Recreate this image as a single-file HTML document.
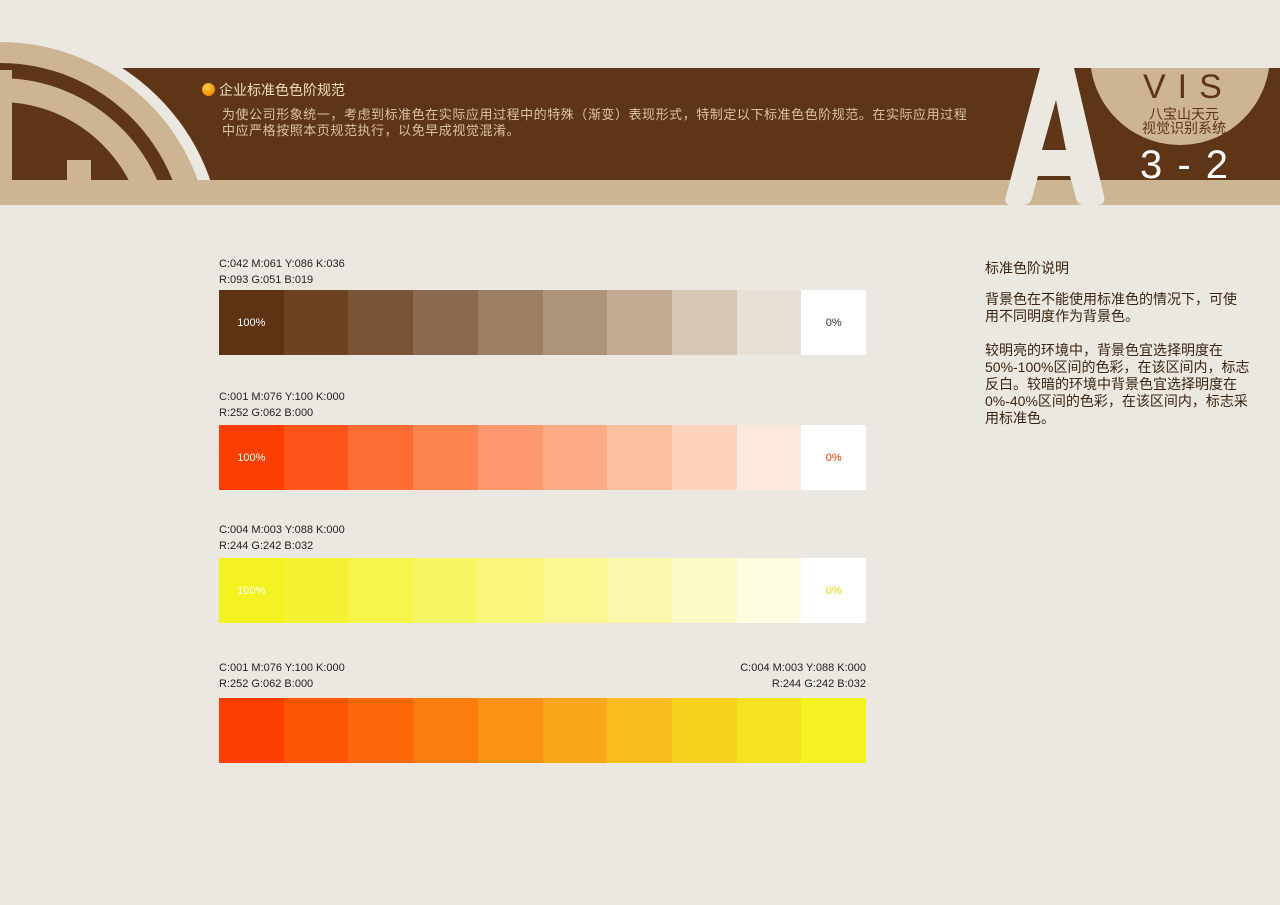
<!DOCTYPE html>
<html><head><meta charset="utf-8"><style>
body{margin:0;width:1280px;height:905px;background:#ebe8e2;position:relative;overflow:hidden;font-family:"Liberation Sans","Noto Sans CJK SC",sans-serif}
.abs{position:absolute}
.lbl{font-size:11px;color:#222;line-height:16px}
.row{position:absolute;left:219px;width:647px;height:65px;display:flex}
.row div{flex:1;display:flex;align-items:center;justify-content:center;font-size:11px}
</style></head><body>
<svg class="abs" style="left:0;top:0" width="1280" height="215">
<rect x="120" y="68" width="1160" height="112" fill="#5e3516"/>
<ellipse cx="0" cy="250" rx="222" ry="218" fill="#ebe8e2"/>
<ellipse cx="0" cy="250" rx="210" ry="208" fill="#cdb593"/>
<ellipse cx="0" cy="250" rx="186" ry="187" fill="#5e3516"/>
<ellipse cx="0" cy="250" rx="172" ry="172" fill="#cdb593"/>
<ellipse cx="0" cy="250" rx="146" ry="148" fill="#5e3516"/>
<rect x="0" y="70" width="12" height="140" fill="#cdb593"/>
<rect x="67" y="160" width="24" height="25" fill="#cdb593"/>
<rect x="0" y="180" width="1280" height="25" fill="#cdb593"/>
<rect x="0" y="205" width="1280" height="10" fill="#ebe8e2"/>
<clipPath id="c"><rect x="1080" y="68" width="200" height="112"/></clipPath>
<circle cx="1180" cy="55" r="90" fill="#cdb593" clip-path="url(#c)"/>
<path d="M1040 68 L1074 68 L1104 196 Q1106 205 1096 205 L1084 205 Q1078 205 1076 198 L1070 176 L1038 176 L1032 198 Q1030 205 1022 205 L1012 205 Q1003 205 1006 196 Z M1042 150 L1066 150 L1056 100 Z" fill="#ebe8e2"/>
</svg>
<div class="abs" style="left:202px;top:83px;width:13px;height:13px;border-radius:50%;background:radial-gradient(circle at 40% 35%,#ffd24a,#f08a00 70%,#c55a00)"></div>
<div class="abs" style="left:219px;top:80px;font-size:14px;color:#f0dcc0">企业标准色色阶规范</div>
<div class="abs" style="left:222px;top:107px;font-size:13px;line-height:16px;color:#dcc3a2;white-space:nowrap;letter-spacing:0.55px">为使公司形象统一，考虑到标准色在实际应用过程中的特殊（渐变）表现形式，特制定以下标准色色阶规范。在实际应用过程<br>中应严格按照本页规范执行，以免早成视觉混淆。</div>
<div class="abs" style="left:1143px;top:68px;font-size:34px;letter-spacing:12px;color:#5e3516">VIS</div>
<div class="abs" style="left:1140px;top:107px;font-size:14px;line-height:14px;color:#5e3516;text-align:center;width:88px">八宝山天元<br>视觉识别系统</div>
<div class="abs" style="left:1140px;top:145px;font-size:40px;line-height:40px;color:#fff;letter-spacing:2px">3 - 2</div>

<div class="abs lbl" style="left:219px;top:256px">C:042 M:061 Y:086 K:036<br>R:093 G:051 B:019</div>
<div class="row" style="top:290px"><div style="background:#5d3313;color:#fff">100%</div><div style="background:#6b4222"></div><div style="background:#7b5436"></div><div style="background:#8b6a4f"></div><div style="background:#9b7f65"></div><div style="background:#ac937a"></div><div style="background:#c2ab92"></div><div style="background:#d6c7b2"></div><div style="background:#e8e0d5"></div><div style="background:#fff;color:#333">0%</div></div>

<div class="abs lbl" style="left:219px;top:389px">C:001 M:076 Y:100 K:000<br>R:252 G:062 B:000</div>
<div class="row" style="top:425px"><div style="background:#fc3e00;color:#fff">100%</div><div style="background:#fd5519"></div><div style="background:#fd6c33"></div><div style="background:#fd834f"></div><div style="background:#fd996c"></div><div style="background:#fdab86"></div><div style="background:#fdbf9d"></div><div style="background:#fdd3bb"></div><div style="background:#fde8dc"></div><div style="background:#fff;color:#e04000">0%</div></div>

<div class="abs lbl" style="left:219px;top:522px">C:004 M:003 Y:088 K:000<br>R:244 G:242 B:032</div>
<div class="row" style="top:558px"><div style="background:#f4f220;color:#fff">100%</div><div style="background:#f4f333"></div><div style="background:#f6f54c"></div><div style="background:#f7f665"></div><div style="background:#f8f77c"></div><div style="background:#f9f893"></div><div style="background:#faf9ab"></div><div style="background:#fcfbc6"></div><div style="background:#fdfde2"></div><div style="background:#fff;color:#e8d800">0%</div></div>

<div class="abs lbl" style="left:219px;top:660px">C:001 M:076 Y:100 K:000<br>R:252 G:062 B:000</div>
<div class="abs lbl" style="left:700px;top:660px;width:166px;text-align:right">C:004 M:003 Y:088 K:000<br>R:244 G:242 B:032</div>
<div class="row" style="top:698px"><div style="background:#fc3e00"></div><div style="background:#fd5305"></div><div style="background:#fd680a"></div><div style="background:#fb7d0e"></div><div style="background:#fa9313"></div><div style="background:#f8a817"></div><div style="background:#f7bd1b"></div><div style="background:#f6d21f"></div><div style="background:#f5e222"></div><div style="background:#f4f220"></div></div>

<div class="abs" style="left:985px;top:258px;font-size:14px;color:#3a2410">标准色阶说明</div>
<div class="abs" style="left:985px;top:291px;font-size:14px;line-height:17px;color:#3a2410;white-space:nowrap">背景色在不能使用标准色的情况下，可使<br>用不同明度作为背景色。<br><br>较明亮的环境中，背景色宜选择明度在<br>50%-100%区间的色彩，在该区间内，标志<br>反白。较暗的环境中背景色宜选择明度在<br>0%-40%区间的色彩，在该区间内，标志采<br>用标准色。</div>
</body></html>
